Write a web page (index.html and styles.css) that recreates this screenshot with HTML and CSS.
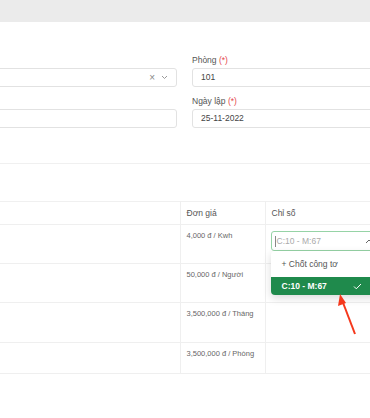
FILE: index.html
```html
<!DOCTYPE html>
<html lang="vi">
<head>
  <meta charset="UTF-8">
  <title>Hóa đơn</title>
  <link rel="stylesheet" href="styles.css">
</head>
<body>
  <div class="topbar"></div>
  <div class="page">
    <div class="form">
      <div class="field">
        <label class="label"></label>
        <div class="input select">
          <span class="value"></span>
          <span class="select-icons">&times; <svg width="7" height="5" viewBox="0 0 7 5"><path d="M1 1l2.5 2.5L6 1" fill="none" stroke="#999" stroke-width="1"/></svg></span>
        </div>
      </div>
      <div class="field">
        <label class="label">Phòng <span class="req">(*)</span></label>
        <div class="input">101</div>
      </div>
      <div class="field">
        <label class="label"></label>
        <div class="input"></div>
      </div>
      <div class="field">
        <label class="label">Ngày lập <span class="req">(*)</span></label>
        <div class="input">25-11-2022</div>
      </div>
    </div>

    <div class="divider"></div>

    <table class="services">
      <colgroup>
        <col class="col-name">
        <col class="col-price">
        <col class="col-index">
      </colgroup>
      <thead>
        <tr>
          <th></th>
          <th>Đơn giá</th>
          <th>Chỉ số</th>
        </tr>
      </thead>
      <tbody>
        <tr class="row-1">
          <td></td>
          <td>4,000 đ / Kwh</td>
          <td class="index-cell">
            <div class="dropdown">
              <div class="dd-input"><span class="caret-bar"></span>C:10 - M:67
                <svg class="dd-arrow" width="8" height="5" viewBox="0 0 8 5"><path d="M1 4l3-3 3 3" fill="none" stroke="#666" stroke-width="1"/></svg>
              </div>
              <div class="dd-menu">
                <div class="dd-item">+ Chốt công tơ</div>
                <div class="dd-item selected">C:10 - M:67
                  <svg class="dd-check" width="9" height="7" viewBox="0 0 9 7"><path d="M1 3.5l2.3 2.3L8 1" fill="none" stroke="#fff" stroke-width="1"/></svg>
                </div>
              </div>
            </div>
          </td>
        </tr>
        <tr class="row-2">
          <td></td>
          <td>50,000 đ / Người</td>
          <td></td>
        </tr>
        <tr class="row-3">
          <td></td>
          <td>3,500,000 đ / Tháng</td>
          <td></td>
        </tr>
        <tr class="row-4">
          <td></td>
          <td>3,500,000 đ / Phòng</td>
          <td></td>
        </tr>
      </tbody>
    </table>
  </div>

  <svg class="pointer" width="30" height="50" viewBox="0 0 30 50">
    <path d="M23 46L10 12" stroke="#f5381c" stroke-width="2" fill="none"/>
    <path d="M8 6L14 15L6 18Z" fill="#f5381c"/>
  </svg>
</body>
</html>
```

FILE: styles.css
```css
* {
    margin: 0;
    padding: 0;
    box-sizing: border-box;
}

body {
    font-family: 'Liberation Sans', Arial, sans-serif;
    background: #fff;
    width: 370px;
    height: 418px;
    overflow: hidden;
    position: relative;
    color: #333;
}

.topbar {
    height: 22px;
    background: #ebebeb;
}

.page {
    margin-left: -200px;
    width: 780px;
}

.form {
    display: grid;
    grid-template-columns: 377px 377px;
    column-gap: 15px;
    row-gap: 9px;
    padding-top: 33px;
}

.label {
    display: block;
    height: 10px;
    font-size: 8.5px;
    line-height: 10px;
    color: #555;
    margin-bottom: 3px;
}

.req {
    color: #e5484d;
}

.input {
    height: 19px;
    border: 1px solid #e2e2e2;
    border-radius: 3px;
    padding: 0 8px;
    font-size: 8.5px;
    line-height: 17px;
    color: #444;
}

.select {
    display: flex;
    justify-content: space-between;
    align-items: center;
}

.select-icons {
    display: flex;
    align-items: center;
    gap: 6px;
    color: #888;
    font-size: 10px;
}

.divider {
    margin-top: 35px;
    height: 1px;
    background: #f0f0f0;
}

.services {
    margin-top: 37px;
    border-collapse: collapse;
    table-layout: fixed;
    width: 780px;
    border-top: 1px solid #f0f0f0;
}

.col-name {
    width: 380px;
}

.col-price {
    width: 85px;
}

.services th,
.services td {
    border-bottom: 1px solid #efefef;
    border-left: 1px solid #efefef;
    text-align: left;
    vertical-align: top;
    padding: 6px 6px 0;
}

.services th:first-child,
.services td:first-child {
    border-left: none;
}

.services th {
    height: 23px;
    padding-top: 0;
    vertical-align: middle;
    font-weight: normal;
    font-size: 8.5px;
    color: #555;
}

.services td {
    font-size: 7.5px;
    color: #666;
    line-height: 10px;
}

.row-1 td { height: 39px; }
.row-2 td { height: 39px; }
.row-3 td { height: 40px; }
.row-4 td { height: 31px; }

.services td.index-cell {
    position: relative;
    padding-left: 5px;
}

.dropdown {
    position: relative;
    width: 120px;
}

.dd-input {
    height: 20px;
    border: 1px solid #96d3a6;
    border-radius: 3px;
    padding: 0 6px 0 3px;
    font-size: 8.5px;
    line-height: 18px;
    color: #aaa;
    display: flex;
    align-items: center;
    position: relative;
}

.caret-bar {
    width: 1px;
    height: 11px;
    background: #888;
    margin-right: 1px;
}

.dd-arrow {
    position: absolute;
    left: 93px;
    top: 7px;
}

.dd-menu {
    position: absolute;
    top: 20px;
    left: 0;
    width: 120px;
    background: #fff;
    border-radius: 4px;
    box-shadow: 0 3px 8px rgba(0, 0, 0, 0.15);
    padding-top: 2px;
}

.dd-item {
    height: 22px;
    padding-left: 11px;
    font-size: 8.5px;
    line-height: 22px;
    color: #555;
    position: relative;
}

.dd-item.selected {
    margin-top: 2px;
    height: 18px;
    line-height: 18px;
    background: #1f8a4c;
    color: #fff;
    font-weight: bold;
    border-radius: 0 0 4px 4px;
}

.dd-check {
    position: absolute;
    left: 82px;
    top: 6px;
}

.pointer {
    position: absolute;
    left: 332px;
    top: 288px;
}
```
